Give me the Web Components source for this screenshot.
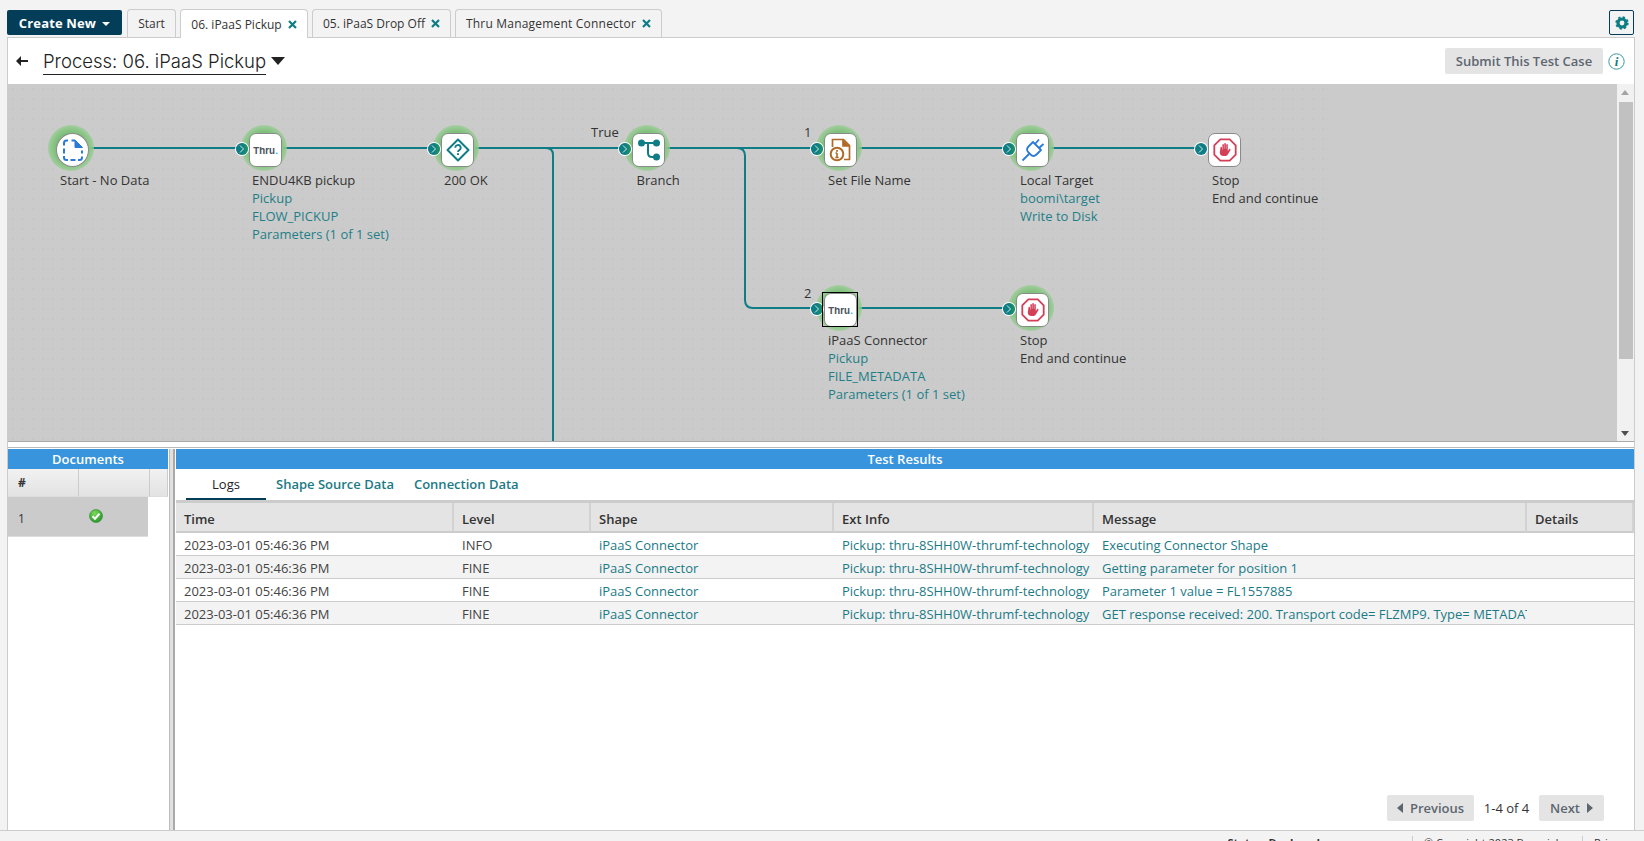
<!DOCTYPE html>
<html>
<head>
<meta charset="utf-8">
<title>Process</title>
<style>
html, body { margin: 0; height: 100%; overflow: hidden; background: #f3f3f3; font-family: "Open Sans", sans-serif; }
</style>
</head>
<body>
<app-shell></app-shell>
<script>
const TEAL = '#0f7d85'

class TopTabs extends HTMLElement {
    constructor() {
        super()
        this.attachShadow({ mode: 'open' })
        const tabs = [['Start', false, false, 49], ['06. iPaaS Pickup', true, true, 128], ['05. iPaaS Drop Off', true, false, 139], ['Thru Management Connector', true, false, 207, 'letter-spacing:.2px']]
        const close = `<svg width="9" height="9" viewBox="0 0 9 9"><path d="M1 1 8 8M8 1 1 8" stroke="${TEAL}" stroke-width="2.200" fill="none"/></svg>`
        this.shadowRoot.innerHTML = `
        <style>
            :host { display: flex; position: relative; z-index: 2; height: 37px; padding: 0 10px 0 7px; box-sizing: border-box; align-items: flex-start; font-size: 12px; color: #333; }
            .create { width: 115px; height: 25px; margin: 10px 1px 0 0; background: #033d58; color: #fff; font-weight: 700; font-size: 13px; letter-spacing: .15px; border-radius: 2px; display: flex; align-items: center; justify-content: center; gap: 6px; box-sizing: border-box; }
            .create i { border: 4px solid transparent; border-top: 4px solid #fff; border-bottom: 0; margin-top: 2px; }
            .tab { height: 28px; margin: 9px 0 0 4px; box-sizing: border-box; border: 1px solid #ccc; border-bottom: 0; border-radius: 4px 4px 0 0; display: flex; align-items: center; justify-content: center; gap: 6px; white-space: nowrap; }
            .tab.on { background: #fff; height: 29px; }
            .gear { margin-left: auto; width: 25px; height: 25px; margin-top: 10px; box-sizing: border-box; border: 1px solid #033d58; border-radius: 2px; display: flex; align-items: center; justify-content: center; }
        </style>
        <div class="create">Create New <i></i></div>
        ${tabs.map(t => `<div class="tab ${t[2] ? 'on' : ''}" style="width:${t[3]}px;${t[4] || ''}">${t[0]}${t[1] ? close : ''}</div>`).join('')}
        <div class="gear"><svg width="14" height="14" viewBox="0 0 14 14" fill="none" stroke="${TEAL}"><circle cx="7" cy="7" r="4" stroke-width="3.200"/><circle cx="7" cy="7" r="5.800" stroke-width="1.800" stroke-dasharray="2.300 2.255"/></svg></div>`
    }
}
customElements.define('top-tabs', TopTabs)

class ProcessHeader extends HTMLElement {
    constructor() {
        super()
        this.attachShadow({ mode: 'open' })
        this.shadowRoot.innerHTML = `
        <style>
            :host { display: flex; height: 46px; align-items: center; background: #fff; padding-left: 8px; padding-right: 9px; box-sizing: border-box; }
            svg.back { margin-right: 15px; }
            .title { font-family: Inter, sans-serif; font-weight: 300; font-size: 18.500px; color: #222; border-bottom: 1px solid #222; line-height: 25px; width: 223px; white-space: nowrap; margin-top: 2px; }
            .caret { border: 7.500px solid transparent; border-top: 8px solid #222; border-bottom: 0; margin: -1px 0 0 5px; }
            .submit { margin-left: auto; width: 158px; height: 26px; background: #e4e4e4; color: #5d6670; border-radius: 2px; font-size: 13px; font-weight: 600; display: flex; align-items: center; justify-content: center; }
            .info { margin-left: 5px; }
        </style>
        <svg class="back" width="12" height="10" viewBox="0 0 12 10"><path fill="#222" d="M5 0v4h7v2H5v4L0 5z"/></svg>
        <div class="title">Process: 06. iPaaS Pickup</div>
        <div class="caret"></div>
        <div class="submit">Submit This Test Case</div>
        <svg class="info" width="17" height="17" viewBox="0 0 17 17"><circle cx="8.500" cy="8.500" r="7.700" fill="none" stroke="#3a97a0"/><text x="8.500" y="13" text-anchor="middle" font-family="Liberation Serif, serif" font-style="italic" font-weight="700" font-size="13" fill="${TEAL}">i</text></svg>`
    }
}
customElements.define('process-header', ProcessHeader)

const ICONS = {
    start: `<svg width="24" height="24" viewBox="0 0 24 24" fill="none" stroke="#2b7bd6" stroke-width="2"><path d="M3 7.500V5q0-2.500 2.500-2.500H7M10.500 2.500H14M21 12.500v3M21 18.500v1q0 2.500-2.500 2.500H17M9.500 22h5M7 22H5.500Q3 22 3 19.500V18M3 10.500v5"/><path d="M14 2 21.500 9.500H14z" fill="#2b7bd6" stroke-width="1"/></svg>`,
    thru: `<span class="thru">Thru<em>.</em></span>`,
    decision: `<svg width="24" height="24" viewBox="0 0 24 24" fill="none" stroke="${TEAL}" stroke-width="2"><path d="M12 1.500 22.500 12 12 22.500 1.500 12z" stroke-linejoin="round"/><path d="M9.300 9.800a2.700 2.700 0 1 1 4 2.300c-.9.500-1.300 1-1.300 2" stroke-width="1.800"/><path d="M12 15.200v1.900"/></svg>`,
    branch: `<svg width="24" height="24" viewBox="0 0 24 24" fill="none" stroke="${TEAL}" stroke-width="2"><circle cx="4.500" cy="5" r="3.500" fill="${TEAL}" stroke="none"/><circle cx="19.500" cy="5" r="3.500" fill="${TEAL}" stroke="none"/><circle cx="19.500" cy="19" r="3.500" fill="${TEAL}" stroke="none"/><path d="M4.500 5h15M11 5v10q0 4 4 4h4.500"/></svg>`,
    message: `<svg width="24" height="24" viewBox="0 0 24 24" fill="none" stroke="#b06a27" stroke-width="1.700"><path d="M3.500 9V1.500H14.500L20.500 7.500V21.500H15"/><path d="M14 1.500V8H20.500" fill="#b06a27"/><circle cx="8" cy="16" r="6.300" stroke-width="2"/><path d="M8 15V19.500M6.300 19.500H9.700M6.500 15H8" stroke-width="1.600"/><path d="M8 12v1.800" stroke-width="1.800"/></svg>`,
    plug: `<svg width="24" height="24" viewBox="0 0 24 24" fill="none" stroke="#2b7bd6" stroke-width="1.800"><path d="M12 4 20 12 15.500 16.500Q12.500 19.500 9.500 16.500L7.500 14.500Q4.500 11.500 7.500 8.500z" stroke-linejoin="round"/><path d="M14 6 18 1.500M18 10 22.500 6M8 16 1.500 22.500"/></svg>`,
    stop: `<svg width="24" height="24" viewBox="0 0 24 24"><path fill="none" stroke="#d43f58" stroke-width="1.800" d="M7.300 1.300h9.400l6 6v9.400l-6 6H7.300l-6-6V7.300z"/><path fill="#d43f58" d="M7.500 9.500c0-.9 1.300-.9 1.500 0v2h.4V6.700c0-1 1.500-1 1.500 0v4h.4V5.700c0-1 1.600-1 1.600 0v5h.4V6.800c0-1 1.500-1 1.500 0v6.200l1.300-1.800c.7-.8 1.900 0 1.300 1l-2.600 4.300c-.8 1.200-1.700 1.500-3 1.500h-1.500c-2.200 0-3.500-1.300-3.500-3.500z"/></svg>`
}

class FlowNode extends HTMLElement {
    connectedCallback() {
        const icon = this.getAttribute('icon')
        const halo = this.hasAttribute('halo')
        const inp = this.hasAttribute('input')
        const round = icon == 'start'
        const sel = this.hasAttribute('selected')
        const root = this.attachShadow({ mode: 'open' })
        root.innerHTML = `
        <style>
            :host { position: absolute; display: block; width: 46px; height: 46px; }
            .halo { position: absolute; inset: 0; border-radius: 50%; background: radial-gradient(circle closest-side, #79bb76 0 62%, #8cc688 82%, rgba(150,205,145,.7) 100%); z-index: 1; }
            .conn { position: absolute; left: -5px; top: 18px; width: 12px; height: 12px; border-radius: 50%; background: ${halo ? `linear-gradient(90deg, ${TEAL} 45%, #1f9468)` : TEAL}; box-shadow: 0 0 0 1px #fff; display: flex; align-items: center; justify-content: center; z-index: 2; }
            .box { position: absolute; left: 8px; top: 8px; width: 33px; height: 34px; box-sizing: border-box; background: #fff; border: 1px solid #8a8a8a; border-radius: ${round ? '50%' : '7px'}; display: flex; align-items: center; justify-content: center; z-index: 3; }
            .sel { position: absolute; left: 6px; top: 7px; width: 36px; height: 35px; box-sizing: border-box; border: 1px solid #000; z-index: 4; }
            .thru { font: 700 9.500px Inter, sans-serif; color: #4a5560; }
            .thru em { color: #20aee8; font-style: normal; }
            .lab { position: absolute; left: var(--lx, 11px); top: 46px; white-space: nowrap; font-size: 13px; line-height: 18px; color: #333; z-index: 3; }
            ::slotted(a) { display: block; color: #1f7f88; }
        </style>
        ${halo ? '<div class="halo"></div>' : ''}
        ${inp ? `<div class="conn"><svg width="6" height="8" viewBox="0 0 6 8"><path d="M1 .5 4.500 4 1 7.500" fill="none" stroke="#cfeee0" stroke-width="1"/></svg></div>` : ''}
        <div class="box">${ICONS[icon]}</div>
        ${sel ? '<div class="sel"></div>' : ''}
        <div class="lab"><slot></slot></div>`
    }
}
customElements.define('flow-node', FlowNode)

class FlowCanvas extends HTMLElement {
    constructor() {
        super()
        this.attachShadow({ mode: 'open' })
        this.shadowRoot.innerHTML = `
        <style>
            :host { display: block; position: relative; height: 357px; background-color: #cbcbcb; overflow: hidden; }
            .dots { position: absolute; left: 0; top: 0; bottom: 0; width: 1324px; background-image: radial-gradient(circle, #c0c0c0 0.6px, transparent 0.8px); background-size: 10px 10px; }
            svg.wires { position: absolute; left: 0; top: 0; }
            .bar { position: absolute; right: 0; top: 0; bottom: 0; width: 17px; background: #f1f1f1; }
            .thumb { position: absolute; left: 2px; right: 1px; top: 18px; height: 257px; background: #c1c1c1; }
            .up, .down { position: absolute; left: 4px; border: 4px solid transparent; }
            .up { top: 6px; border-top: 0; border-bottom: 5px solid #a3a3a3; }
            .down { bottom: 5px; border-bottom: 0; border-top: 5px solid #505050; }
            .tag { position: absolute; font-size: 13px; line-height: 18px; color: #333; }
        </style>
        <div class="dots"></div>
        <svg class="wires" width="1644" height="357" fill="none" stroke="${TEAL}" stroke-width="2">
            <path d="M64 64H1195"/>
            <path d="M538 64Q545 64 545 71V357"/>
            <path d="M729 64Q737 64 737 72V216Q737 224 745 224H1020"/>
        </svg>
        <slot></slot>
        <span class="tag" style="left:583px;top:39px">True</span>
        <span class="tag" style="left:796px;top:39px">1</span>
        <span class="tag" style="left:796px;top:200px">2</span>
        <div class="bar"><i class="up"></i><div class="thumb"></div><i class="down"></i></div>`
    }
}
customElements.define('flow-canvas', FlowCanvas)

class DocPanel extends HTMLElement {
    constructor() {
        super()
        this.attachShadow({ mode: 'open' })
        this.shadowRoot.innerHTML = `
        <style>
            :host { display: block; width: 160px; flex: none; font-size: 12px; color: #333; background: #fff; }
            h3 { margin: 0; height: 20px; background: #3894dd; color: #fff; font-size: 13px; font-weight: 600; line-height: 20px; text-align: center; }
            .head { display: grid; grid-template-columns: 71px 71px 18px; height: 28px; }
            .head span { background: linear-gradient(#f1f1f1, #e3e3e3); border-right: 1px solid #ccc; font-weight: 700; padding: 5px 0 0 10px; box-sizing: border-box; border-bottom: 1px solid #ddd; }
            .row { width: 140px; height: 40px; background: #cbcbcb; display: grid; grid-template-columns: 71px 1fr; align-items: center; border-bottom: 1px solid #ddd; box-sizing: border-box; }
            .row span { padding: 3px 0 0 10px; }
            .row svg { margin: -2px 0 0 10px; display: block; }
        </style>
        <h3>Documents</h3>
        <div class="head"><span>#</span><span></span><span></span></div>
        <div class="row"><span>1</span><svg width="14" height="14" viewBox="0 0 14 14"><defs><radialGradient id="g" cx=".4" cy=".3" r=".8"><stop offset="0" stop-color="#7ed957"/><stop offset="1" stop-color="#1f8f2a"/></radialGradient></defs><circle cx="7" cy="7" r="6.500" fill="url(#g)" stroke="#2c8a2c" stroke-width=".6"/><path d="M3.500 7.300 6 9.700 10.500 4.700" fill="none" stroke="#fff" stroke-width="2"/></svg></div>`
    }
}
customElements.define('doc-panel', DocPanel)

class ResultsPanel extends HTMLElement {
    constructor() {
        super()
        this.attachShadow({ mode: 'open' })
        const ext = 'Pickup: thru-8SHH0W-thrumf-technology'
        const rows = [
            ['INFO', 'Executing Connector Shape'],
            ['FINE', 'Getting parameter for position 1'],
            ['FINE', 'Parameter 1 value = FL1557885'],
            ['FINE', 'GET response received: 200. Transport code= FLZMP9. Type= METADATA']
        ]
        this.shadowRoot.innerHTML = `
        <style>
            :host { display: flex; flex-direction: column; flex: 1; min-width: 0; font-size: 13px; color: #333; background: #fff; position: relative; }
            h3 { margin: 0; height: 20px; flex: none; background: #3894dd; color: #fff; font-size: 13px; font-weight: 600; line-height: 20px; text-align: center; }
            nav { display: flex; height: 31px; flex: none; padding-left: 10px; box-sizing: border-box; font-size: 13px; font-weight: 600; color: #1b7a86; }
            nav span { padding-top: 6px; margin-right: 20px; white-space: nowrap; }
            nav .on { width: 80px; box-sizing: border-box; text-align: center; color: #222; font-weight: 400; border-bottom: 2px solid #033d58; height: 31px; margin-right: 10px; }
            .grid { display: grid; grid-template-columns: 278px 137px 243px 260px 433px 1fr; border-top: 3px solid #ccc; }
            .grid > div { height: 23px; line-height: 24px; box-sizing: border-box; padding-left: 8px; border-bottom: 1px solid #ccc; overflow: hidden; white-space: nowrap; color: #1b7a86; }
            .grid > .th { height: 30px; line-height: 32px; background: #e4e4e4; color: #333; font-weight: 600; border-bottom: 2px solid #ccc; border-right: 2px solid #d2d2d2; }
            .grid > .t { color: #444; }
            .grid > .alt { background: #f3f3f3; }
            .pager { position: absolute; right: 30px; bottom: 9px; display: flex; align-items: center; color: #333; }
            .pg { height: 26px; background: #e4e4e4; border-radius: 2px; color: #5d6670; font-weight: 600; display: flex; align-items: center; justify-content: center; gap: 7px; box-sizing: border-box; }
            .count { width: 65px; text-align: center; }
            .l { border: 5px solid transparent; border-right: 6px solid #5d6670; border-left: 0; }
            .r { border: 5px solid transparent; border-left: 6px solid #5d6670; border-right: 0; }
        </style>
        <h3>Test Results</h3>
        <nav><span class="on">Logs</span><span>Shape Source Data</span><span>Connection Data</span></nav>
        <div class="grid">
            ${['Time', 'Level', 'Shape', 'Ext Info', 'Message', 'Details'].map(h => `<div class="th">${h}</div>`).join('')}
            ${rows.map((r, i) => {
                const c = i % 2 ? 'alt' : ''
                return `<div class="t ${c}">2023-03-01 05:46:36 PM</div><div class="t ${c}">${r[0]}</div><div class="${c}">iPaaS Connector</div><div class="${c}">${ext}</div><div class="${c}">${r[1]}</div><div class="${c}"></div>`
            }).join('')}
        </div>
        <div class="pager">
            <div class="pg" style="width:87px"><i class="l"></i>Previous</div>
            <div class="count">1-4 of 4</div>
            <div class="pg" style="width:65px">Next<i class="r"></i></div>
        </div>`
    }
}
customElements.define('results-panel', ResultsPanel)

class AppFooter extends HTMLElement {
    constructor() {
        super()
        this.attachShadow({ mode: 'open' })
        this.shadowRoot.innerHTML = `
        <style>
            :host { display: flex; justify-content: flex-end; flex: none; height: 10px; border-top: 1px solid #ccc; font-size: 11px; color: #333; overflow: hidden; }
            span { margin-top: 5px; padding-left: 11px; height: 20px; line-height: 13px; border-left: 1px solid #ccc; white-space: nowrap; overflow: hidden; box-sizing: border-box; }
            .a { border: 0; margin-right: 92px; padding: 0; font-weight: 700; }
        </style>
        <span class="a">Status: Deployed</span>
        <span style="width:170px">&copy; Copyright 2023 Boomi, Inc.</span>
        <span style="width:62px">Privacy</span>`
    }
}
customElements.define('app-footer', AppFooter)

class AppShell extends HTMLElement {
    constructor() {
        super()
        this.attachShadow({ mode: 'open' })
        this.shadowRoot.innerHTML = `
        <style>
            :host { display: flex; flex-direction: column; height: 841px; width: 1644px; overflow: hidden; }
            .main { position: relative; flex: 1; min-height: 0; margin: 0 9px 0 7px; border: 1px solid #ccc; border-bottom: 0; background: #fff; display: flex; flex-direction: column; }
            .split { height: 7px; flex: none; box-sizing: border-box; border-top: 1px solid #aaa; border-bottom: 1px solid #bbb; background: #fff; margin-bottom: 1px; }
            .lower { flex: 1; min-height: 0; display: flex; }
            .vsplit { width: 6px; flex: none; margin: 0 1px; box-sizing: border-box; background: #e0e0e0; border-left: 1px solid #bbb; border-right: 2px solid #aaa; }
        </style>
        <top-tabs></top-tabs>
        <div class="main">
            <process-header></process-header>
            <flow-canvas>
                <flow-node icon="start" halo style="left:40px;top:41px;--lx:12px">Start - No Data</flow-node>
                <flow-node icon="thru" halo input style="left:233px;top:41px">ENDU4KB pickup<a>Pickup</a><a>FLOW_PICKUP</a><a>Parameters (1 of 1 set)</a></flow-node>
                <flow-node icon="decision" halo input style="left:425px;top:41px">200 OK</flow-node>
                <flow-node icon="branch" halo input style="left:616px;top:41px;--lx:12.500px">Branch</flow-node>
                <flow-node icon="message" halo input style="left:808px;top:41px;--lx:12px">Set File Name</flow-node>
                <flow-node icon="plug" halo input style="left:1000px;top:41px;--lx:12px">Local Target<a>boomi\\target</a><a>Write to Disk</a></flow-node>
                <flow-node icon="stop" input style="left:1192px;top:41px;--lx:12px">Stop<br>End and continue</flow-node>
                <flow-node icon="thru" halo input selected style="left:808px;top:201px;--lx:12px">iPaaS Connector<a>Pickup</a><a>FILE_METADATA</a><a>Parameters (1 of 1 set)</a></flow-node>
                <flow-node icon="stop" halo input style="left:1000px;top:201px;--lx:12px">Stop<br>End and continue</flow-node>
            </flow-canvas>
            <div class="split"></div>
            <div class="lower">
                <doc-panel></doc-panel>
                <div class="vsplit"></div>
                <results-panel></results-panel>
            </div>
        </div>
        <app-footer></app-footer>`
    }
}
customElements.define('app-shell', AppShell)
</script>
</body>
</html>
